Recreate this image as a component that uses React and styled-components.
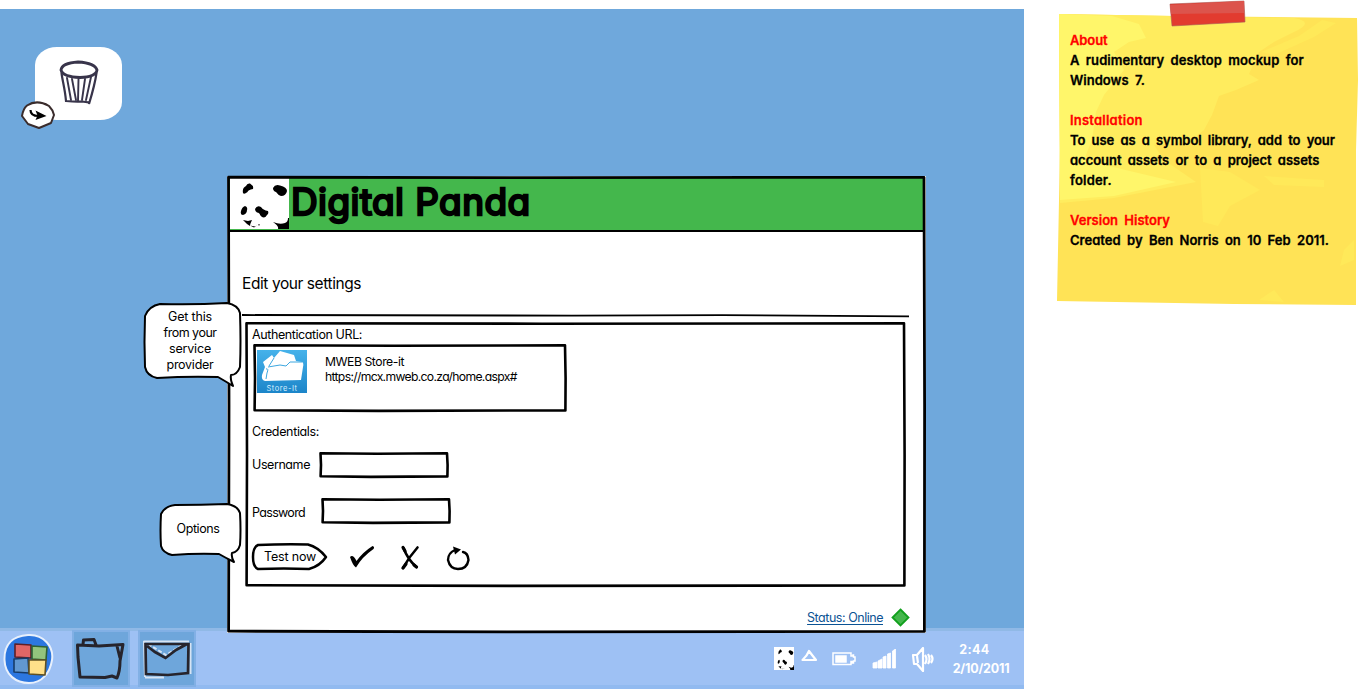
import React from "react";
import styled, { createGlobalStyle } from "styled-components";

const Global = createGlobalStyle`
  *{box-sizing:border-box}
  html,body{margin:0;background:#fff;overflow:hidden}
  body{font-family:Inter,"Open Sans",sans-serif;font-feature-settings:"cv11","calt" 0;color:#000}
`;

const Page = styled.main`display:flex;width:1359px;height:689px;padding-top:9px;overflow:hidden;`;
const Desktop = styled.section`position:relative;flex:0 0 1024px;height:680px;background:#6fa8dc;display:flex;flex-direction:column;justify-content:space-between;`;

const ShortcutArea = styled.div`position:relative;width:122px;padding:38px 0 0 35px;`;
const ShortcutTile = styled.div`width:87px;height:73px;border-radius:22px / 18px;background:#fff;display:flex;justify-content:center;padding-top:13px;`;
const ShortcutBadge = styled.svg`position:absolute;left:20px;top:91px;`;

const Window = styled.section`position:absolute;left:227px;top:167px;width:699px;height:457px;padding:2px;background:#fff;display:flex;flex-direction:column;`;
const Frame = styled.svg`position:absolute;left:0;top:0;width:100%;height:100%;overflow:visible;pointer-events:none;fill:none;stroke:#000;`;
const TitleBar = styled.header`height:54px;display:flex;flex:none;background:#44b74c;border-bottom:2px solid #000;padding-left:1px;`;
const Title = styled.h1`margin:-3px 0 0 2px;font-size:37px;line-height:54px;font-weight:400;color:#000;letter-spacing:${p => p.$ls}px;white-space:nowrap;-webkit-text-stroke:2.4px #000;stroke-linejoin:round;`;
const Heading = styled.h2`margin:42px 0 0 13px;font-size:15.5px;line-height:20px;font-weight:400;white-space:nowrap;letter-spacing:${p => p.$ls}px;`;
const Divider = styled.svg`display:block;margin:20px 0 0 13px;`;
const Panel = styled.div`position:relative;width:661px;height:265px;margin:4px 0 0 16px;padding:5px 0 0 7px;`;
const Label = styled.span`display:block;width:max-content;font-size:${p => p.$size || 12.5}px;line-height:${p => p.$lh || 16}px;white-space:nowrap;letter-spacing:${p => p.$ls || 0}px;color:${p => p.$color || "#000"};`;
const ProviderBox = styled.div`position:relative;width:314px;height:68px;margin:1px 0 12px 1px;padding:6px 0 0 4px;display:flex;gap:18px;`;
const ProviderText = styled.div`padding-top:4px;`;
const StoreLogo = styled.div`width:50px;height:43px;background:linear-gradient(#45b2ea,#1c85c9);display:flex;flex-direction:column;align-items:center;`;
const StoreName = styled.span`color:#d6efff;font-size:7.5px;line-height:9px;letter-spacing:0.55px;`;
const Field = styled.label`display:flex;align-items:center;height:26px;margin-top:${p => p.$mt}px;gap:${p => p.$gap}px;`;
const FieldLabel = styled(Label)`padding-top:${p => p.$drop || 0}px;`;
const InputBox = styled.span`position:relative;width:130px;height:26px;`;
const Actions = styled.div`display:flex;align-items:center;height:28px;margin-top:19px;`;
const TestButton = styled.button`position:relative;width:76px;height:27px;padding:0 0 1px 12px;border:0;background:none;font:inherit;text-align:left;`;
const ActionIcon = styled.svg`margin:${p => p.$m};flex:none;`;
const Footer = styled.footer`display:flex;justify-content:flex-end;align-items:center;gap:8px;padding:21px 14px 0 0;`;
const StatusLink = styled.a`color:#0b5394;font-size:12.5px;line-height:16px;text-decoration:underline;text-underline-offset:2px;text-decoration-skip-ink:none;letter-spacing:-0.47px;`;

const Bubble = styled.div`position:absolute;left:${p => p.$x}px;top:${p => p.$y}px;width:${p => p.$w}px;height:${p => p.$h}px;padding:${p => p.$pt}px 5px 0 0;display:flex;flex-direction:column;align-items:center;`;
const BubbleShape = styled.svg`position:absolute;left:0;top:0;overflow:visible;`;
const BubbleLine = styled(Label)`position:relative;`;

const Taskbar = styled.nav`height:61px;background:#9ec1f4;border-top:3px solid #90b9e6;border-bottom:4px solid #91baf0;display:flex;justify-content:space-between;`;
const Launchers = styled.div`display:flex;align-items:flex-start;padding-left:3px;`;
const StartButton = styled.svg`margin-top:1px;`;
const TaskTile = styled.div`width:58px;height:57px;margin:-1px 0 0 ${p => p.$ml}px;border:2px solid #82b0e5;background:#6ea6db;`;
const Tray = styled.div`display:flex;align-items:flex-start;padding:16px 13px 0 0;`;
const TrayIcon = styled.svg`margin:${p => p.$m};flex:none;`;
const Clock = styled.div`width:60px;margin:-5px 0 0 16px;display:flex;flex-direction:column;align-items:center;color:#fff;font-weight:700;`;
const Time = styled(Label)`margin-left:-13px;`;

const NoteColumn = styled.aside`position:relative;width:335px;padding:21px 0 0 46px;`;
const NotePaper = styled.svg`position:absolute;left:30px;top:-9px;`;
const NoteText = styled.div`position:relative;`;
const NoteLine = styled.div`width:max-content;height:20px;font-size:13px;line-height:20px;font-weight:600;-webkit-text-stroke:0.3px;white-space:nowrap;color:${p => (p.$red ? "#f00" : "#000")};letter-spacing:${p => p.$ls || 0}px;word-spacing:3px;`;

const Panda = ({ w, h }) => (
  <svg width={w} height={h} viewBox="0 0 59 51" preserveAspectRatio="none">
    <path fill="#fff" d="M0 0h59v51H0z" />
    <path d="M13 15Q12 10 16 8Q17 5 20 5.500Q24 8 23 11Q18 12 17.500 14Q14 17 13 15zM43 10Q45 6 50 7.500Q57 9 57 13Q56 18 51 18Q48 17 46 14Q43 13 43 10zM11 33Q12 29 15 28Q18 29 17 32Q17 36 13 37Q10 37 11 33zM25 31Q27 27 31 29Q33 32 38 33Q39 36 37 37Q34 42 30 37Q30 35 27 34.500Q25 33 25 31zM13 42L18 43L22 42Q20 46 20 48L17 46zM20 47.500l5 1 2-1-3 2zM28 46.500h2v0.700h-2zM43 44Q50 47 55 45Q58 44 58 40H59V51H48Q49 48 43 44z" />
  </svg>
);

const BoxFrame = ({ w, h, t = 2.6 }) => (
  <Frame viewBox={`0 0 ${w} ${h}`} preserveAspectRatio="none" strokeWidth={t} strokeLinejoin="round">
    <path d={`M1.500 1.200L${w * 0.45} 1.700L${w - 2} 1.300L${w - 1.4} ${h * 0.5}L${w - 1.6} ${h - 1.6}L${w * 0.4} ${h - 1.1}L1.600 ${h - 1.8}L2 ${h * 0.5}Z`} />
  </Frame>
);

const noteLines = [
  ["About", 1, -0.1],
  ["A rudimentary desktop mockup for", 0, 0.07],
  ["Windows 7.", 0, 0.02],
  null,
  ["Installation", 1, 0.22],
  ["To use as a symbol library, add to your", 0, -0.06],
  ["account assets or to a project assets", 0, -0.03],
  ["folder.", 0, 0.2],
  null,
  ["Version History", 1, 0.01],
  ["Created by Ben Norris on 10 Feb 2011.", 0, 0.03],
];

export default function App() {
  return (
    <Page>
      <Global />
      <Desktop>
        <ShortcutArea>
          <ShortcutTile>
            <svg width="42" height="46" viewBox="0 0 42 46" fill="none" stroke="#38344a" strokeWidth="2.200" strokeLinecap="round">
              <path d="M3 10Q4 3 20 2Q37 3 39 10Q38 17 22 17.500Q5 17 3 10z" strokeWidth="2.800" />
              <path d="M3.500 13C4.500 21 7 29 8 41Q18 42 24 41.500L31 42.500V44C34 34 37 24 38.500 13" />
              <path d="M9 18l4 22M14 19l4 21M20.500 19l-.5 22M27 19l-3 21M33 17l-5 23" strokeWidth="1.900" />
            </svg>
          </ShortcutTile>
          <ShortcutBadge width="36" height="30" viewBox="0 0 36 30">
            <path d="M7 5.500Q17-1 29 6Q33 10 34 15L31 23L19 28L8 24L2 16Q3 9 7 5.500Z" fill="#fff" stroke="#3a2c2c" strokeWidth="2" strokeLinejoin="round" />
            <path d="M10.500 10q0 6 8 6" fill="none" stroke="#000" strokeWidth="2.200" />
            <path d="M15.500 10.500l11 5.500-11 4 2-4.500z" />
          </ShortcutBadge>
        </ShortcutArea>

        <Taskbar>
          <Launchers>
            <StartButton width="51" height="53" viewBox="0 0 51 53">
              <path d="M25 3C41 2 51 15 49 28S39 51 26 51 2 43 1.500 28 9 4 25 3z" fill="#2c77e0" stroke="#e8f0fc" strokeWidth="2" />
              <g strokeWidth="1.600" strokeLinejoin="round">
                <path d="M12 12l16 1v13l-16-1z" fill="#e06666" stroke="#5d2028" />
                <path d="M29 14l15 1-1 13-14-1z" fill="#93c47d" stroke="#2e6135" />
                <path d="M11 27l14-1 1 15-15-1z" fill="#6298d0" stroke="#173c68" />
                <path d="M26 28h17l-1 15-16-1z" fill="#ffe08a" stroke="#5f5023" />
              </g>
            </StartButton>
            <TaskTile $ml={18}>
              <svg width="54" height="52" viewBox="0 0 54 52" fill="none" stroke="#26242c" strokeWidth="3" strokeLinejoin="round" strokeLinecap="round">
                <path d="M3.500 13L4 25L6 45L31 45.500L38 44L43 46Q46 39 46 29L49 12.500L25 14zM9 12.500L9.500 8L20 7.500L22 13M43 14L46 26" />
              </svg>
            </TaskTile>
            <TaskTile $ml={8}>
              <svg width="54" height="52" viewBox="0 0 54 52" fill="none">
                <path d="M3.500 9.500H49M4 9L5 45M50.500 11V42M5 45.500H24" stroke="#d6e4f4" strokeWidth="2" />
                <path d="M8 12L26 23L44 12" stroke="#d6e4f4" strokeWidth="2" strokeDasharray="4 2" />
                <path d="M5.500 12H48.500L48 41L28 43L6 42zM7 14L15 20L25.500 26L36 18L47 12" stroke="#26242c" strokeWidth="2.700" />
              </svg>
            </TaskTile>
          </Launchers>
          <Tray>
            <Panda w={20} h={23} />
            <TrayIcon $m="2px 0 0 7px" width="17" height="15" viewBox="0 0 17 15" fill="none" stroke="#fff" strokeWidth="2.200" strokeLinejoin="round"><path d="M8 2Q11 6 15 11H1.500Q6 7 8 2z" /></TrayIcon>
            <TrayIcon $m="5px 0 0 14px" width="26" height="14" viewBox="0 0 26 14" fill="none" stroke="#fff" strokeWidth="1.500"><path d="M1 1h18v3h2V3h.5v2H23v4h-1.500v2H20V9.500h-1v3H1z" /><path d="M4 4h10v6H4z" fill="#fff" /></TrayIcon>
            <TrayIcon $m="2px 0 0 14px" width="26" height="20" viewBox="0 0 26 20" fill="#fff" stroke="#fff" strokeWidth=".8"><path d="M1 14l4-1v6H1zM6 12l4-2v9H6zM11 8l3-1v12h-3zM15.500 5l3-1v15h-3zM20.500 2l3-2v19h-3z" /></TrayIcon>
            <TrayIcon $m="0 0 0 13px" width="24" height="25" viewBox="0 0 24 25" fill="none" stroke="#fff" strokeWidth="2.200" strokeLinejoin="round"><path d="M2 8h4l6-7v23l-6-7H3zM6 9l1 7M14 8q3 4 0 9M17 7q3 5 0 10M20 8q3 4 0 8" /></TrayIcon>
            <Clock><Time $color="#fff" $ls={0.35}>2:44</Time><Label $color="#fff" $lh={21} $ls={-0.2}>2/10/2011</Label></Clock>
          </Tray>
        </Taskbar>

        <Window>
          <TitleBar><Panda w={59} h={51} /><Title $ls={0.4}>Digital Panda</Title></TitleBar>
          <Heading $ls={-0.42}>Edit your settings</Heading>
          <Divider width="668" height="4" fill="none" stroke="#000" strokeWidth="1.800"><path d="M0 1L330 1.600L480 1.200L667 2.400" /></Divider>
          <Panel>
            <BoxFrame w={661} h={265} />
            <Label $ls={-0.4}>Authentication URL:</Label>
            <ProviderBox>
              <BoxFrame w={314} h={68} />
              <StoreLogo>
                <svg width="50" height="34" viewBox="0 0 50 34">
                  <path fill="#fff" d="M6 12L15 5L17 8L23 1L37 5L39 11L45 12Q47 13 46 17L44 30L8 31Q4 30 5 25L8 17z" />
                  <path d="M17 8L12 16M11 17L17 16L23 15L29 16L33 12H45M9 19Q12 18 10 23L9 29" fill="none" stroke="#3ca7e0" strokeWidth="1" />
                </svg>
                <StoreName>Store-It</StoreName>
              </StoreLogo>
              <ProviderText>
                <Label $lh={15} $size={12.2} $ls={-0.45}>MWEB Store-it</Label>
                <Label $lh={15} $size={12.2} $ls={-0.68}>https://mcx.mweb.co.za/home.aspx#</Label>
              </ProviderText>
            </ProviderBox>
            <Label $ls={-0.35}>Credentials:</Label>
            <Field $mt={12} $gap={9}><Label $ls={-0.42}>Username</Label><InputBox><BoxFrame w={130} h={26} /></InputBox></Field>
            <Field $mt={20} $gap={16}><FieldLabel $drop={3} $ls={-0.68}>Password</FieldLabel><InputBox><BoxFrame w={130} h={26} /></InputBox></Field>
            <Actions>
              <TestButton>
                <Frame viewBox="0 0 76 27" strokeWidth="2.500" strokeLinejoin="round"><path d="M6 1Q30 0 56 .5Q66 3 74 13Q68 22 57 25Q32 24 6 25Q1 23 1 13Q1 3 6 1z" /></Frame>
                <Label $ls={-0.18}>Test now</Label>
              </TestButton>
              <ActionIcon $m="0 0 1px 21px" width="26" height="24" viewBox="0 0 26 24"><path d="M1 12Q4 9 7.500 16Q14 7 23.500 1Q26 2 24.500 4Q13 12 7 22.500Q4 21 1 12z" /></ActionIcon>
              <ActionIcon $m="2px 0 0 25px" width="20" height="26" viewBox="0 0 20 26" fill="none" stroke="#000" strokeWidth="2.600" strokeLinecap="round"><path d="M3.500 3Q8 15 16.500 22M17.500 2.500Q9 12 3 23" /><path d="M3 2.500l2 3.500M3 23l3-4M14 20l2.500 2" strokeWidth="3.200" /></ActionIcon>
              <ActionIcon $m="3px 0 0 26px" width="26" height="27" viewBox="0 0 26 27"><path d="M9 5Q2 8 2 15Q4 24 12 24Q21 24 22.500 15Q22 8 17 7" fill="none" stroke="#000" strokeWidth="2.400" strokeLinecap="round" /><path d="M7 1.500l8 3-6 5z" /></ActionIcon>
            </Actions>
          </Panel>
          <Footer>
            <StatusLink>Status: Online</StatusLink>
            <svg width="19" height="19" viewBox="0 0 19 19"><path d="M9.500 1.500L17.500 9.500L9.500 17.500L1.500 9.500z" fill="#44b74c" stroke="#11a01d" strokeWidth="1.800" /></svg>
          </Footer>
          <BoxFrame w={699} h={457} t={2.8} />
        </Window>

        <Bubble $x={143} $y={293} $w={99} $h={86} $pt={7}>
          <BubbleShape width="99" height="86" viewBox="0 0 99 86" fill="#fff" stroke="#000" strokeWidth="2" strokeLinejoin="round">
            <path d="M2 14Q6 4 17 2Q50 3 84 1Q95 3 97 11Q98 40 97 65Q94 73 88 73Q87 77 90 84Q82 79 75 75Q45 74 14 76Q4 74 2 65Q1 40 2 14z" />
          </BubbleShape>
          <BubbleLine $ls={-0.17}>Get this</BubbleLine>
          <BubbleLine $ls={-0.5}>from your</BubbleLine>
          <BubbleLine $ls={-0.18}>service</BubbleLine>
          <BubbleLine $ls={-0.26}>provider</BubbleLine>
        </Bubble>
        <Bubble $x={159} $y={494} $w={83} $h={61} $pt={18}>
          <BubbleShape width="83" height="61" viewBox="0 0 83 61" fill="#fff" stroke="#000" strokeWidth="2" strokeLinejoin="round">
            <path d="M2 11Q6 3 16 2Q42 2 68 1Q79 3 81 10Q82 28 81 42Q79 49 73 50Q72 54 75 59Q67 55 60 51Q38 50 13 52Q4 50 2 43Q1 28 2 11z" />
          </BubbleShape>
          <BubbleLine $ls={-0.4}>Options</BubbleLine>
        </Bubble>
      </Desktop>

      <NoteColumn>
        <NotePaper width="305" height="310" viewBox="0 0 305 310">
          <path d="M5 14L120 16L303 18L304 80L302 150L302 305L180 304L3 301L6 150z" fill="#ffe356" />
          <path d="M5 14L240 18Q262 22 240 32L220 42L205 52L195 74L205 80L182 90L165 96L158 115L150 130L135 142L100 145L110 160L142 182L60 198L6 203z" fill="#ffec5e" />
          <path d="M5 14L58 16L85 24L92 38L75 42L60 52L70 70L50 95L42 112L38 140L30 160L80 172L122 182L60 196L6 200z" fill="#fff66a" />
          <path d="M146 168l30 4 30 18-30 16-12 20-15-4zM210 176l60 4v7l-50-2zM268 20l14 3-22 14-40 18-13-3 38-16zM290 250l10-10v20l-14 6zM205 300l15-10 10 12z" fill="#ffe959" />
          <path d="M116 4L190 1L191 22L118 26z" fill="#e23b2f" stroke="#a85a55" strokeWidth=".6" />
          <path d="M116 5L190 1V13L117 14z" fill="#dc544c" />
        </NotePaper>
        <NoteText>
          {noteLines.map((line, i) => line
            ? <NoteLine key={i} $red={line[1]} $ls={line[2]}>{line[0]}</NoteLine>
            : <NoteLine key={i} />)}
        </NoteText>
      </NoteColumn>
    </Page>
  );
}
